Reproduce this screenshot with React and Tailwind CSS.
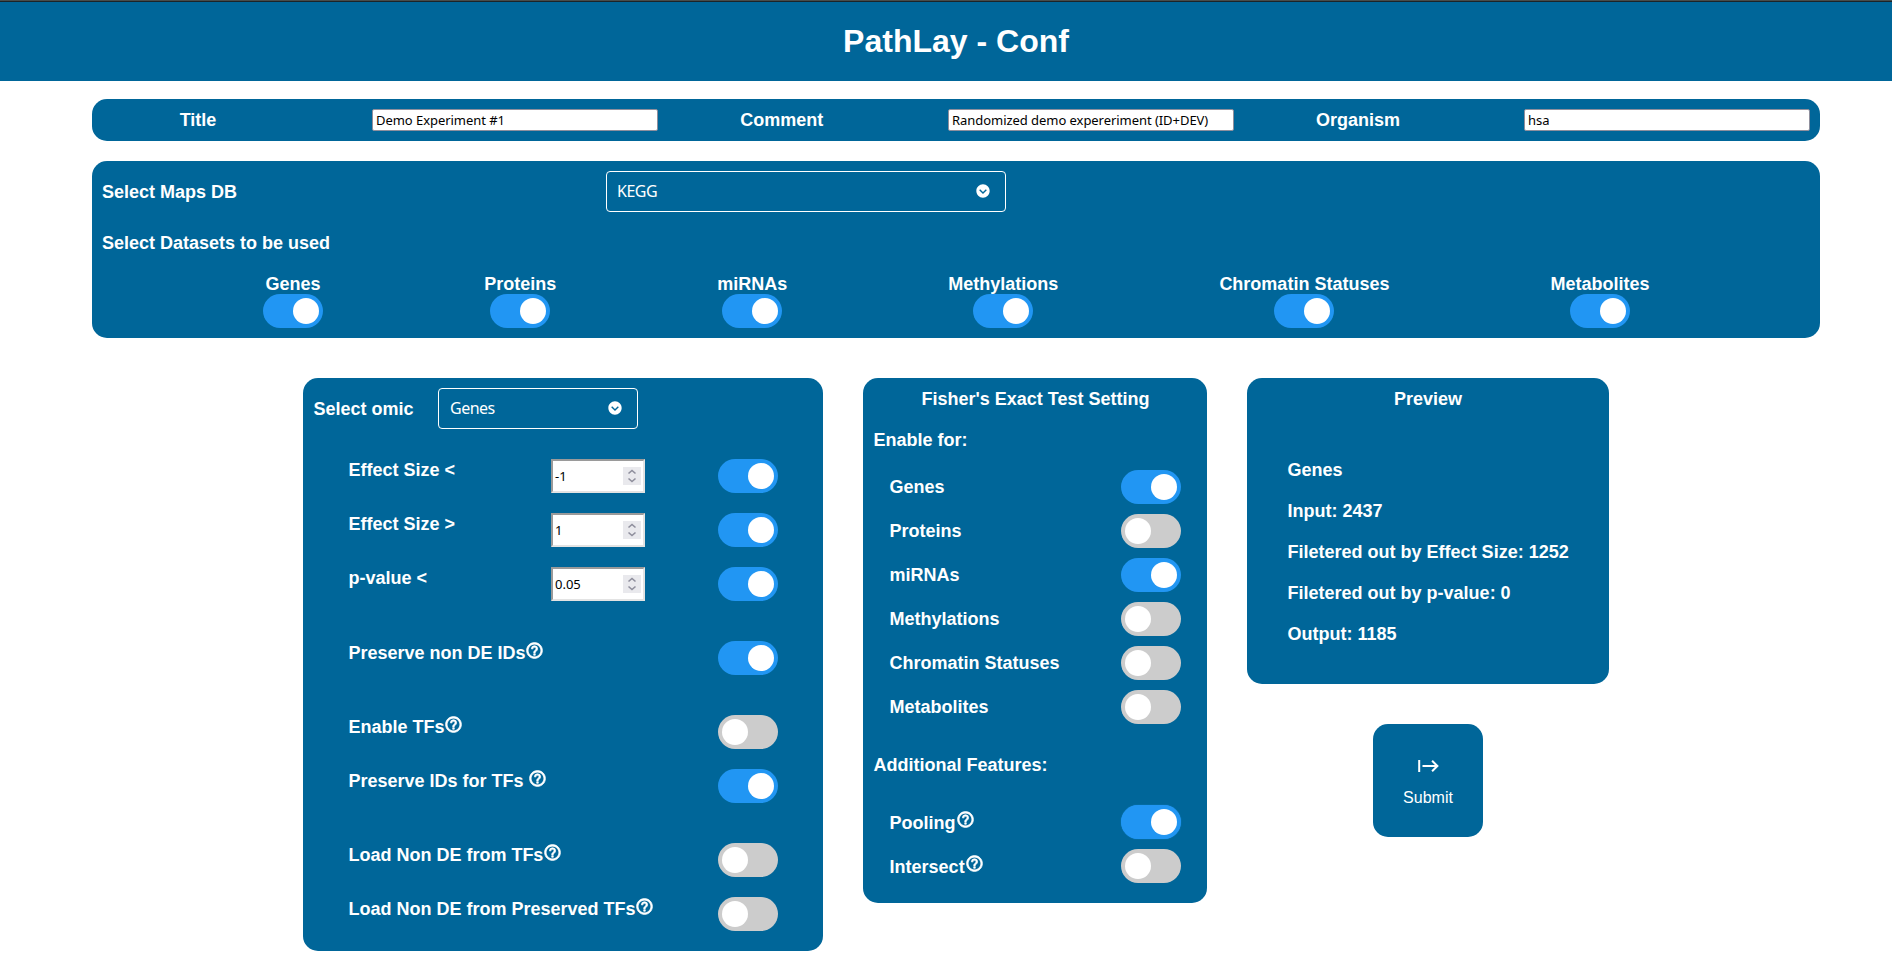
import { BiHelpCircle, BiSolidChevronDownCircle } from "react-icons/bi";

const datasets = ["Genes", "Proteins", "miRNAs", "Methylations", "Chromatin Statuses", "Metabolites"];

const fisher = [
  ["Genes", true],
  ["Proteins", false],
  ["miRNAs", true],
  ["Methylations", false],
  ["Chromatin Statuses", false],
  ["Metabolites", false],
];

function Toggle({ on, focused }) {
  return (
    <span
      role="switch"
      aria-checked={on}
      className={`flex h-[34px] w-[60px] shrink-0 items-center rounded-full px-1 ${
        on ? "justify-end bg-[#2196f3]" : "justify-start bg-[#cccccc]"
      } ${focused ? "shadow-[0_0_1px_#2196f3]" : ""}`}
    >
      <span className="size-[26px] rounded-full bg-white" />
    </span>
  );
}

function Help({ className }) {
  return <BiHelpCircle className={`size-[19px] shrink-0 stroke-current [stroke-width:0.9] ${className}`} />;
}

function ArrowFromLeft() {
  return (
    <svg className="h-3 w-[21px]" viewBox="0 0 21 12" fill="none" stroke="currentColor" strokeWidth="2">
      <path d="M1.2 0v12M4.5 6H19.5M14.1 0.8 19.4 6l-5.3 5.2" />
    </svg>
  );
}

function TextField({ value }) {
  return (
    <div className="ml-auto flex h-[22px] w-[286px] items-center rounded-[2px] border border-[#8f8f9d] bg-white px-[3px] font-['Noto_Sans',sans-serif] text-[13px] tracking-[-0.05px] font-normal text-black">
      {value}
    </div>
  );
}

function NumberField({ value }) {
  return (
    <div className="flex h-[34px] w-[94px] items-center justify-between border-2 border-t-[#9a9a9a] border-r-[#e3e3e3] border-b-[#e3e3e3] border-l-[#9a9a9a] bg-white pr-[2px] pl-[2px] font-['Noto_Sans',sans-serif] text-[13px] font-normal text-black">
      <span>{value}</span>
      <svg className="h-[18px] w-[18px] bg-[#e9e9ed]" viewBox="0 0 18 18" fill="none" stroke="#8f8f9d" strokeWidth="1.6">
        <path d="M5.5 6.5 9 3.5l3.5 3M5.5 11.5 9 14.5l3.5-3" />
      </svg>
    </div>
  );
}

function Select({ value, className }) {
  return (
    <div
      className={`flex h-[41px] items-center justify-between rounded-[4px] border border-white pr-[14px] pb-px font-['Noto_Sans',sans-serif] text-[16px] tracking-[-0.5px] font-normal ${className}`}
    >
      <span>{value}</span>
      <BiSolidChevronDownCircle className="size-4" />
    </div>
  );
}

function OmicRow({ label, help, spaced, value, on }) {
  return (
    <div className="flex h-[34px] items-start">
      <div className="flex w-[203px] items-start pl-[0.4px] whitespace-nowrap">
        <span className={`${spaced ? "mr-[5px]" : ""} ${help ? "pt-px" : ""}`}>{label}</span>
        {help && <Help className="-mt-[0.5px]" />}
      </div>
      {value && <NumberField value={value} />}
      <div className="ml-auto">
        <Toggle on={on} />
      </div>
    </div>
  );
}

function FisherRow({ label, help, on, focused }) {
  return (
    <div className="flex h-[34px] items-center justify-between">
      <div className={`flex items-start pl-[0.6px] ${help ? "pt-0.5" : ""}`}>
        <span>{label}</span>
        {help && <Help className="-mt-[1.5px]" />}
      </div>
      <Toggle on={on} focused={focused} />
    </div>
  );
}

export default function App() {
  return (
    <div className="h-[963px] w-full overflow-hidden bg-white font-['Liberation_Sans',Arial,sans-serif] text-[18px] leading-[23px] font-bold text-white">
      <div className="h-px bg-[#484c4a]" />
      <div className="h-px bg-[#1c2428]" />
      <header className="flex h-[79px] items-center justify-center bg-[#006699] pl-5">
        <h1 className="text-[32px] leading-[37px]">PathLay - Conf</h1>
      </header>

      <main className="pt-[18px] pr-[72px] pl-[92px]">
        <section className="grid h-[42px] grid-cols-[556px_576px_576px] items-center rounded-[15px] bg-[#006699] px-[10px]">
          <div className="flex items-center">
            <span className="w-[192px] text-center">Title</span>
            <TextField value="Demo Experiment #1" />
          </div>
          <div className="flex items-center">
            <span className="w-[247.5px] text-center">Comment</span>
            <TextField value="Randomized demo expereriment (ID+DEV)" />
          </div>
          <div className="flex items-center">
            <span className="w-[248px] text-center">Organism</span>
            <TextField value="hsa" />
          </div>
        </section>

        <section className="mt-5 h-[177px] rounded-[15px] bg-[#006699] p-[10px]">
          <div className="flex items-center">
            <span className="w-[504px] pt-0.5">Select Maps DB</span>
            <Select value="KEGG" className="w-[400px] pl-[10px]" />
          </div>
          <div className="mt-5">Select Datasets to be used</div>
          <div className="mt-[19px] -mr-[0.6px] flex justify-evenly">
            {datasets.map((name) => (
              <div key={name} className="flex flex-col items-center">
                <span className="h-5 leading-[21px]">{name}</span>
                <Toggle on />
              </div>
            ))}
          </div>
        </section>

        <div className="mt-10 flex items-start justify-center gap-10">
          <section className="h-[573px] w-[520px] rounded-[15px] bg-[#006699] p-[10px]">
            <div className="flex items-center">
              <span className="w-[125px] pt-0.5 pl-[0.4px]">Select omic</span>
              <Select value="Genes" className="w-[200px] pl-[11px]" />
            </div>
            <div className="flex flex-col gap-10 pt-[30px] pr-[35px] pl-[35px]">
              <div className="flex flex-col gap-5">
                <OmicRow label="Effect Size <" value="-1" on />
                <OmicRow label="Effect Size >" value="1" on />
                <OmicRow label="p-value <" value="0.05" on />
              </div>
              <OmicRow label="Preserve non DE IDs" help on />
              <div className="flex flex-col gap-5">
                <OmicRow label="Enable TFs" help on={false} />
                <OmicRow label="Preserve IDs for TFs" help spaced on />
              </div>
              <div className="flex flex-col gap-5">
                <OmicRow label="Load Non DE from TFs" help on={false} />
                <OmicRow label="Load Non DE from Preserved TFs" help on={false} />
              </div>
            </div>
          </section>

          <section className="h-[525px] w-[344px] rounded-[15px] bg-[#006699] p-[10px]">
            <h2 className="pl-px text-center">Fisher's Exact Test Setting</h2>
            <h3 className="mt-[18px] pl-[0.6px]">Enable for:</h3>
            <div className="mt-[18px] flex flex-col gap-[10px] px-4">
              {fisher.map(([label, on]) => (
                <FisherRow key={label} label={label} on={on} />
              ))}
            </div>
            <h3 className="mt-[30px] pl-[0.6px]">Additional Features:</h3>
            <div className="mt-[28px] flex flex-col gap-[10px] px-4">
              <FisherRow label="Pooling" help on focused />
              <FisherRow label="Intersect" help on={false} />
            </div>
          </section>

          <div className="flex w-[362px] flex-col items-center gap-10">
            <section className="h-[306px] w-full rounded-[15px] bg-[#006699] p-[10px]">
              <h2 className="text-center">Preview</h2>
              <div className="mt-[48px] flex flex-col gap-[18px] pl-[30.6px]">
                <p>Genes</p>
                <p>Input: 2437</p>
                <p>Filetered out by Effect Size: 1252</p>
                <p>Filetered out by p-value: 0</p>
                <p>Output: 1185</p>
              </div>
            </section>
            <button className="flex h-[113px] w-[110px] flex-col items-center rounded-[15px] bg-[#006699] pt-9 text-base font-normal">
              <ArrowFromLeft />
              <span className="mt-[14px] leading-[24px]">Submit</span>
            </button>
          </div>
        </div>
      </main>
    </div>
  );
}
